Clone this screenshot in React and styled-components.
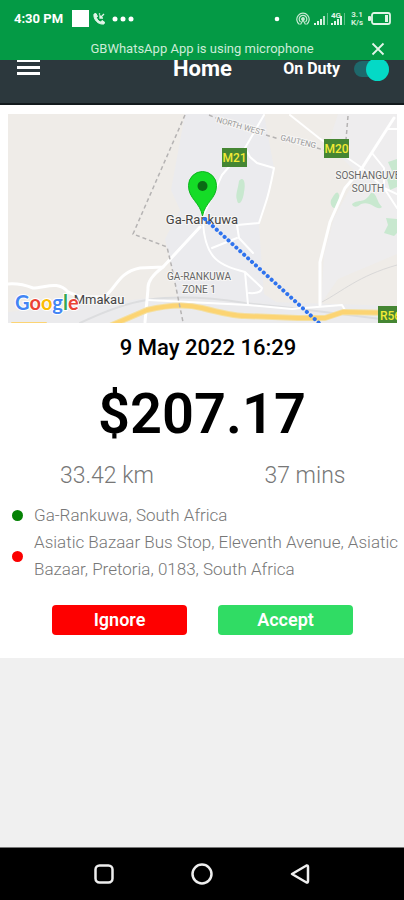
import React from "react";
import styled, { createGlobalStyle } from "styled-components";

const GlobalStyle = createGlobalStyle`
  *, *::before, *::after { box-sizing: border-box; }
  body {
    margin: 0;
    background: #f0f0f0;
    font-family: Roboto, "Liberation Sans", sans-serif;
  }
`;

const Screen = styled.div`
  min-height: 100vh;
  display: flex;
  flex-direction: column;
`;

const SystemBar = styled.div`
  background: #049a45;
  color: #fff;
`;

const StatusRow = styled.div`
  height: 37px;
  padding: 0 13px 0 14px;
  display: flex;
  align-items: center;
  justify-content: space-between;
`;

const StatusGroup = styled.div`
  display: flex;
  align-items: center;
  gap: ${(p) => p.$gap}px;
`;

const Clock = styled.span`
  font-size: 13px;
  font-weight: 700;
  line-height: 20px;
  margin-right: 6px;
`;

const WhiteTile = styled.span`
  width: 17px;
  height: 17px;
  background: #fff;
`;

const Speed = styled.span`
  display: flex;
  flex-direction: column;
  align-items: center;
  width: 14px;
  font-size: 8px;
  font-weight: 700;
  line-height: 8px;
  color: #d3efdc;
`;

const MicNotice = styled.div`
  height: 23px;
  padding: 0 18px 0 34px;
  display: grid;
  grid-template-columns: 1fr auto;
  align-items: center;
  font-size: 13px;
  line-height: 20px;
  text-align: center;
  color: #cdecd8;
`;

const IconButton = styled.button`
  display: flex;
  padding: 0;
  border: 0;
  background: none;
  color: #fff;
  cursor: pointer;
`;

const Header = styled.header`
  height: 45px;
  overflow: hidden;
  background: #2c383d;
  border-bottom: 2px solid #12191c;
  color: #fff;
`;

const HeaderRow = styled.div`
  height: 16px;
  padding: 0 15px 0 16px;
  display: grid;
  grid-template-columns: 1fr auto 1fr;
  align-items: center;
`;

const Title = styled.h1`
  margin: 0;
  font-size: 22px;
  font-weight: 700;
  line-height: 16px;
`;

const DutyLabel = styled.label`
  display: flex;
  align-items: center;
  justify-content: flex-end;
  gap: 14px;
  font-size: 16px;
  font-weight: 700;
  line-height: 16px;
  white-space: nowrap;
  cursor: pointer;
`;

const Switch = styled.input`
  appearance: none;
  flex: none;
  display: flex;
  align-items: center;
  justify-content: flex-end;
  width: 35px;
  height: 16px;
  margin: 0;
  border-radius: 8px;
  background: #1e686b;
  cursor: pointer;
  &::before {
    content: "";
    flex: none;
    width: 23px;
    height: 23px;
    border-radius: 50%;
    background: #04d9c6;
  }
  &:not(:checked) { justify-content: flex-start; }
`;

const TripCard = styled.main`
  background: #fff;
  padding: 9px 0 23px;
`;

const MapFrame = styled.div`
  margin: 0 7px 0 8px;
  svg { display: block; width: 100%; height: auto; }
`;

const TripDate = styled.p`
  margin: 11px 0 0;
  padding-left: 12px;
  text-align: center;
  font-size: 22px;
  font-weight: 500;
  line-height: 28px;
`;

const Price = styled.p`
  margin: 20px 0 0;
  text-align: center;
  font-size: 56px;
  font-weight: 600;
  line-height: 64px;
`;

const Stats = styled.div`
  margin-top: 16px;
  padding-left: 8px;
  display: grid;
  grid-template-columns: 1fr 1fr;
  text-align: center;
  font-size: 23px;
  font-weight: 300;
  line-height: 28px;
  color: #777;
`;

const Stops = styled.ul`
  list-style: none;
  margin: 12px 0 0;
  padding: 0 0 0 12px;
`;

const Stop = styled.li`
  display: flex;
  align-items: center;
  gap: 11px;
  font-size: 17px;
  font-weight: 300;
  line-height: 27px;
  color: #777;
  &::before {
    content: "";
    flex: none;
    width: 11px;
    height: 11px;
    border-radius: 50%;
    background: ${(p) => p.$color};
  }
`;

const Actions = styled.div`
  margin-top: 22px;
  padding: 0 51px 0 52px;
  display: grid;
  grid-template-columns: 1fr 1fr;
  gap: 31px;
`;

const ActionButton = styled.button`
  height: 30px;
  padding: 0;
  border: 0;
  border-radius: 4px;
  background: ${(p) => p.$color};
  color: #fff;
  font-family: inherit;
  font-size: 18px;
  font-weight: 600;
  line-height: 30px;
  cursor: pointer;
`;

const NavBar = styled.nav`
  margin-top: auto;
  height: 53px;
  padding: 0 55px;
  display: grid;
  grid-template-columns: repeat(3, 1fr);
  justify-items: center;
  align-items: center;
  background: #000;
  border-top: 1px solid #777;
`;

const Road = styled.path`
  fill: none;
  stroke: ${(p) => p.$color || "#fff"};
  stroke-width: ${(p) => p.$width || 2};
  stroke-linejoin: round;
  stroke-linecap: round;
`;

const Boundary = styled.path`
  fill: none;
  stroke: #b5b3b3;
  stroke-width: 1.5;
  stroke-dasharray: 4 3;
`;

const MapText = styled.text`
  font-family: ${(p) => p.$font || "Roboto"}, sans-serif;
  font-size: ${(p) => p.$size || 10}px;
  fill: ${(p) => p.$color || "#666"};
  font-weight: ${(p) => p.$weight || 400};
  text-anchor: ${(p) => p.$anchor || "middle"};
  paint-order: stroke;
  stroke: ${(p) => p.$halo || "#f7f6f5"};
  stroke-width: ${(p) => (p.$halo === "none" ? 0 : 2)}px;
`;

const Shield = ({ x, y, name }) => (
  <g>
    <rect x={x} y={y} width="25" height="19" fill="#458633" />
    <MapText x={x + 12.5} y={y + 13.5} $size={12} $weight={500} $color="#f2ea35" $halo="none">
      {name}
    </MapText>
  </g>
);

const RouteMap = () => (
  <svg viewBox="0 0 389 209" role="img" aria-label="Route map">
    <rect width="389" height="209" fill="#efece8" />
    <path d="M177 0H256L266 54L251 112L256 180L300 209H175L164 154L157 125L172 96L163 76Z" fill="#ebebee" />
    <path d="M330 0H389V140L330 165L313 190L316 140L326 104L350 60L320 30Z" fill="#eeedee" />
    <path d="M0 198L90 190L140 184L389 192V209H0Z" fill="#ebebed" />
    <g fill="#c8e8cf">
      <path d="M231 67C236 61 238 70 236 78C235 88 230 93 229 86C227 81 230 75 231 67Z" />
      <path d="M326 81C331 74 332 83 331 90C328 99 321 92 323 86Z" />
      <path d="M344 90C352 84 355 91 363 79C369 78 368 87 374 93C369 98 363 86 353 90C350 93 345 94 344 90Z" />
      <path d="M389 45L380 48L384 57L379 65L382 76L389 73Z" />
      <path d="M389 105L378 104L380 111L376 119L386 122L389 119Z" />
    </g>
    <Road d="M72 209Q112 190 139 186Q180 180 237 189L284 194L389 207" $color="#dcdddf" $width={2} />
    <Road d="M314 188C335 177 350 162 389 151" $color="#d9d8d8" $width={1} />
    <Road d="M0 170Q12 169 25 174C37 174 50 166 60 178L72 183H96C108 175 110 158 132 154L155 153L192 113" $width={3} />
    <Road d="M155 153Q139 165 140 175L137 208" $width={3} />
    <Road d="M194 104L214 61L237 34L256 1" />
    <Road d="M237 34L242 43L249 49L266 54Q261 80 257 91L251 109L229 111L231 124L245 139" />
    <Road d="M195 108C197 146 212 151 237 158L254 174Q253 180 241 179M237 158L240 191M229 124L204 134" />
    <Road d="M282 1L311 24L341 45L354 54" />
    <Road d="M386 4L354 54L337 74L322 108L312 148V191" $width={3} />
    <Road d="M364 39L376 54V74L389 94M354 54L376 74L389 80M380 15H389" />
    <Road d="M140 186L240 191L284 195L334 191L337 196" />
    <Road d="M104 211L139 196Q172 188 194 194Q225 202 237 202L290 204L317 204L335 198L389 199" $color="#f4dfa0" $width={6} />
    <Road d="M104 211L139 196Q172 188 194 194Q225 202 237 202L290 204L317 204L335 198L389 199" $color="#fcd473" $width={4} />
    <Road d="M4 209H38" $color="#fcd473" $width={2} />
    <Boundary d="M177 1L125 120L159 133L164 154L175 208" />
    <Boundary d="M201 1L208 4M258 21L271 25M309 34L316 36M340 2L338 26" />
    <MapText $size={8} $color="#999" transform="translate(208 8) rotate(16)" $anchor="start">
      NORTH WEST
    </MapText>
    <MapText $size={8} $color="#999" transform="translate(272 26) rotate(13)" $anchor="start">
      GAUTENG
    </MapText>
    <Shield x={214} y={34} name="M21" />
    <Shield x={316} y={25} name="M20" />
    <Shield x={370} y={192} name="R56" />
    <MapText x="360" y="65">SOSHANGUVE</MapText>
    <MapText x="360" y="78">SOUTH</MapText>
    <MapText x="191" y="166">GA-RANKUWA</MapText>
    <MapText x="191" y="179">ZONE 1</MapText>
    <MapText x="194" y="110" $size={13} $color="#444">Ga-Rankuwa</MapText>
    <MapText x="91" y="190" $size={13} $color="#444">Mmakau</MapText>
    <path d="M197 105L311 209" fill="none" stroke="#2f73ee" strokeWidth="4" strokeLinecap="round" strokeDasharray="0.1 5.2" />
    <path d="M194.500 102C192 88 180.500 85 180.500 71.500A14 14 0 0 1 208.500 71.500C208.500 85 197 88 194.500 102Z" fill="#15dc27" stroke="#0cb51e" strokeWidth="1" />
    <circle cx="194.500" cy="72" r="5" fill="#0a6b14" />
    <MapText x="7" y="196" $size={20} $weight={700} $font="Lato" $anchor="start" $halo="#fff">
      <tspan fill="#4285f4">G</tspan>
      <tspan fill="#ea4335">o</tspan>
      <tspan fill="#fbbc05">o</tspan>
      <tspan fill="#4285f4">g</tspan>
      <tspan fill="#34a853">l</tspan>
      <tspan fill="#ea4335">e</tspan>
    </MapText>
  </svg>
);

const CallIcon = () => (
  <svg width="14" height="14" viewBox="0 0 14 14" fill="none" stroke="#e2f5e8">
    <path d="M2 2C1 7 6 13 12 12L12.500 10L10 8.500L8.500 10C6 9 5 7 4.500 5.500L5.500 4.500L4 1.500Z" fill="#e2f5e8" />
    <path d="M12 2L8 6M8 3V6H11M7 1.500L8 2.500" strokeWidth="1.300" />
  </svg>
);

const DotsIcon = () => (
  <svg width="22" height="6" viewBox="0 0 22 6" fill="#fff">
    <circle cx="3" cy="3" r="2.500" />
    <circle cx="11" cy="3" r="2.500" />
    <circle cx="19" cy="3" r="2.500" />
  </svg>
);

const HotspotIcon = () => (
  <svg width="14" height="14" viewBox="0 0 14 14" fill="none" stroke="#c5e9d1" strokeWidth="1.200">
    <path d="M3.500 12.500A6.200 6.200 0 1 1 10.500 12.500" />
    <path d="M4.500 10A3.800 3.800 0 1 1 9.500 10" />
    <circle cx="7" cy="7" r="1.300" fill="#c5e9d1" />
    <path d="M7 8L4.500 12.500M7 8L9.500 12.500" />
  </svg>
);

const SignalIcon = ({ network }) => (
  <svg width="15" height="16" viewBox="0 0 15 16" fill="#e2f5e8">
    <rect x="0" y="12" width="2" height="2" />
    <rect x="3" y="10" width="2" height="4" />
    <rect x="6" y="8" width="2" height="6" />
    <rect x="9" y="5" width="2" height="9" opacity={network ? 1 : 0.8} />
    <rect x="13" y="2" width="1" height="12" opacity="0.4" />
    {network && <text x="0" y="7" fontSize="8" fontWeight="700">{network}</text>}
  </svg>
);

const BatteryIcon = () => (
  <svg width="23" height="13" viewBox="0 0 23 13">
    <rect x="4" y="1" width="18" height="11" rx="2" fill="none" stroke="#e2f5e8" strokeWidth="1.800" />
    <rect x="0" y="4" width="3" height="5" rx="1" fill="#e2f5e8" />
    <rect x="17" y="3" width="3" height="7" fill="#e2f5e8" />
  </svg>
);

const NavIcon = ({ children }) => (
  <svg width="24" height="24" viewBox="0 0 24 24" fill="none" stroke="#eee" strokeWidth="2.500" strokeLinejoin="round">
    {children}
  </svg>
);

export default function App() {
  return (
    <Screen>
      <GlobalStyle />
      <SystemBar>
        <StatusRow>
          <StatusGroup $gap={6}>
            <StatusGroup $gap={3}>
              <Clock>4:30 PM</Clock>
              <WhiteTile />
              <CallIcon />
            </StatusGroup>
            <DotsIcon />
          </StatusGroup>
          <StatusGroup $gap={4}>
            <svg width="18" height="6" viewBox="0 0 18 6" aria-hidden="true">
              <circle cx="3" cy="3" r="2.300" fill="#fff" />
            </svg>
            <HotspotIcon />
            <StatusGroup $gap={2}>
              <SignalIcon />
              <SignalIcon network="4G" />
            </StatusGroup>
            <Speed>
              <span>3.1</span>
              <span>K/s</span>
            </Speed>
            <BatteryIcon />
          </StatusGroup>
        </StatusRow>
        <MicNotice>
          <span>GBWhatsApp App is using microphone</span>
          <IconButton aria-label="Dismiss">
            <svg width="16" height="16" viewBox="0 0 16 16" stroke="#e2f5e8" strokeWidth="1.800">
              <path d="M2.500 2.500L13.500 13.500M13.500 2.500L2.500 13.500" />
            </svg>
          </IconButton>
        </MicNotice>
      </SystemBar>

      <Header>
        <HeaderRow>
          <IconButton aria-label="Open menu">
            <svg width="25" height="18" viewBox="0 0 25 18" stroke="#fff" strokeWidth="3">
              <path d="M1 0.500H24M1 7.500H24M1 13.500H24" />
            </svg>
          </IconButton>
          <Title>Home</Title>
          <DutyLabel>
            On Duty
            <Switch type="checkbox" role="switch" defaultChecked />
          </DutyLabel>
        </HeaderRow>
      </Header>

      <TripCard>
        <MapFrame>
          <RouteMap />
        </MapFrame>
        <TripDate>9 May 2022 16:29</TripDate>
        <Price>$207.17</Price>
        <Stats>
          <span>33.42 km</span>
          <span>37 mins</span>
        </Stats>
        <Stops>
          <Stop $color="#058205">
            <span>Ga-Rankuwa, South Africa</span>
          </Stop>
          <Stop $color="#fb0000">
            <span>Asiatic Bazaar Bus Stop, Eleventh Avenue, Asiatic Bazaar, Pretoria, 0183, South Africa</span>
          </Stop>
        </Stops>
        <Actions>
          <ActionButton $color="#fe0000">Ignore</ActionButton>
          <ActionButton $color="#30dc64">Accept</ActionButton>
        </Actions>
      </TripCard>

      <NavBar>
        <IconButton aria-label="Recent apps">
          <NavIcon>
            <rect x="3.500" y="3.500" width="17" height="17" rx="4" />
          </NavIcon>
        </IconButton>
        <IconButton aria-label="Home screen">
          <NavIcon>
            <circle cx="12" cy="12" r="9.500" />
          </NavIcon>
        </IconButton>
        <IconButton aria-label="Back">
          <NavIcon>
            <path d="M4 12L18.500 3.500Q20 3 20 5V19Q20 21 18.500 20.500Z" />
          </NavIcon>
        </IconButton>
      </NavBar>
    </Screen>
  );
}
